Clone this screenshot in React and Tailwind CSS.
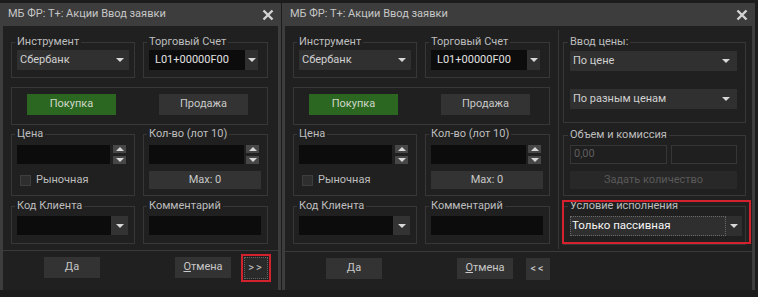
import React from "react";

const Arrow = ({ up = false, color = "#d8d8d8" }) => (
    <svg width="8" height="4" viewBox="0 0 8 4">
        <path d={up ? "M0 4h8L4 0z" : "M0 0h8L4 4z"} fill={color} />
    </svg>
);

const Group = ({ legend, className = "", children }) => (
    <fieldset className={`border border-[#373737] ${className}`}>
        {legend && <legend className="-ml-[2px] px-[2px] leading-4 text-[#bdbdbd]">{legend}</legend>}
        {children}
    </fieldset>
);

const Btn = ({ className = "", children }) => (
    <div className={`flex items-center justify-center bg-[#333333] text-[#c8c8c8] ${className}`}>{children}</div>
);

const Spin = () => (
    <div className="flex h-[19px] w-[13px] flex-col justify-between">
        <div className="flex h-[8px] items-center justify-center bg-[#474747]"><Arrow up /></div>
        <div className="flex h-[8px] items-center justify-center bg-[#474747]"><Arrow /></div>
    </div>
);

function MainPanel() {
    return (
        <div className="w-[273px] shrink-0 pl-[8px] pt-[4px] pb-[4px]">
            {/* instrument / account */}
            <div className="grid grid-cols-[124px_125px] gap-x-[8px]">
                <Group legend="Инструмент" className="px-[5px] pb-[7px]">
                    <div className="flex h-[20px] w-[112px] items-center justify-between bg-[#303030] pl-[3px] pr-[5px] text-[#d0d0d0]">
                        <span>Сбербанк</span>
                        <Arrow />
                    </div>
                </Group>
                <Group legend="Торговый Счет" className="px-[5px] pb-[7px]">
                    <div className="flex h-[20px] w-[109px]">
                        <div className="flex flex-1 items-center bg-[#0c0c0c] pl-[6px] text-[#e2e2e2]">L01+00000F00</div>
                        <div className="flex w-[13px] items-center justify-center bg-[#303030]"><Arrow /></div>
                    </div>
                </Group>
            </div>

            {/* buy / sell */}
            <fieldset className="mt-[9px] flex h-[38px] w-[257px] items-start border border-[#373737] pl-[15px] pt-[6px]">
                <div className="flex h-[21px] w-[89px] items-center justify-center bg-[#2c6722] text-[#cfd8c8]">Покупка</div>
                <Btn className="ml-[43px] h-[21px] w-[89px]">Продажа</Btn>
            </fieldset>

            {/* price / qty */}
            <div className="mt-[1px] grid grid-cols-[124px_125px] gap-x-[8px]">
                <Group legend="Цена" className="px-[5px] pt-[3px] pb-[6px]">
                    <div className="flex gap-[3px]">
                        <div className="h-[19px] w-[93px] bg-[#0c0c0c]" />
                        <Spin />
                    </div>
                    <div className="mt-[7px] flex h-[18px] items-center pl-[3px]">
                        <div className="h-[11px] w-[11px] border border-[#3e3e3e] bg-[#2e2e2e]" />
                        <span className="ml-[5px] text-[#bdbdbd]">Рыночная</span>
                    </div>
                </Group>
                <Group legend="Кол-во (лот 10)" className="px-[5px] pt-[3px] pb-[6px]">
                    <div className="flex gap-[2px]">
                        <div className="h-[19px] w-[95px] bg-[#0c0c0c]" />
                        <Spin />
                    </div>
                    <Btn className="mt-[7px] h-[18px] w-[112px]">Max: 0</Btn>
                </Group>
            </div>

            {/* client / comment */}
            <div className="mt-[2px] grid grid-cols-[124px_125px] gap-x-[8px]">
                <Group legend="Код Клиента" className="px-[5px] pt-[2px] pb-[8px]">
                    <div className="flex h-[19px] w-[111px]">
                        <div className="flex-1 bg-[#0c0c0c]" />
                        <div className="flex w-[17px] items-center justify-center bg-[#333333]"><Arrow /></div>
                    </div>
                </Group>
                <Group legend="Комментарий" className="px-[5px] pt-[2px] pb-[8px]">
                    <div className="h-[19px] w-[112px] bg-[#0c0c0c]" />
                </Group>
            </div>
        </div>
    );
}

function ExtraPanel() {
    return (
        <div className="w-[194px] shrink-0 border-l border-[#363636] pl-[4px] pr-[6px] pt-[4px] pb-[4px]">
            <Group legend="Ввод цены:" className="w-[183px] pl-[6px] pt-[1px] pb-[13px]">
                <div className="flex h-[20px] w-[167px] items-center justify-between bg-[#303030] pl-[3px] pr-[7px] text-[#d0d0d0]">
                    <span>По цене</span>
                    <Arrow />
                </div>
                <div className="mt-[18px] flex h-[20px] w-[167px] items-center justify-between bg-[#303030] pl-[3px] pr-[7px] text-[#d0d0d0]">
                    <span>По разным ценам</span>
                    <Arrow />
                </div>
            </Group>

            <Group legend="Объем  и комиссия" className="mt-[4px] w-[183px] pl-[6px] pt-[2px] pb-[6px]">
                <div className="flex gap-[4px]">
                    <div className="flex h-[19px] w-[97px] items-center border border-[#363636] bg-[#1f1f1f] pl-[3px] text-[#5e5e5e]">0,00</div>
                    <div className="h-[19px] w-[66px] border border-[#363636] bg-[#1f1f1f]" />
                </div>
                <div className="mt-[7px] flex h-[18px] w-[167px] items-center justify-center bg-[#282828] text-[#5a5a5a]">Задать количество</div>
            </Group>

            <div className="relative mt-[2px]">
                <Group legend="Условие исполнения" className="w-[183px] pl-[6px] pt-[2px] pb-[8px]">
                    <div className="flex h-[20px] w-[172px] bg-[#2f2f2f]">
                        <div className="flex flex-1 items-center border border-dotted border-[#6a6a6a] pl-[1px] text-[11.5px] text-[#f6f6f6]">Только пассивная</div>
                        <div className="flex w-[16px] items-center justify-center"><Arrow /></div>
                    </div>
                </Group>
                <div className="absolute -left-[1px] -right-[5px] top-[2px] bottom-[1px] border-2 border-[#d3222e]" />
            </div>
        </div>
    );
}

function Window({ expanded }) {
    return (
        <div className={`flex h-[287px] flex-col border-x-[3px] border-[#3d3d3d] bg-[#202020] ${expanded ? "w-[473px]" : "w-[281px]"}`}>
            <div className="flex h-[23px] shrink-0 items-center justify-between bg-[#3d3d3d] pl-[5px] pr-[4px]">
                <span className="text-[11px] text-[#c6c6c6]">МБ ФР: Т+: Акции Ввод заявки</span>
                <svg width="12" height="12" viewBox="0 0 12 12">
                    <path d="M1.5 1.5l9 9M10.5 1.5l-9 9" stroke="#d4d4d4" strokeWidth="2.4" />
                </svg>
            </div>
            <div className="flex pt-[4px]">
                <MainPanel />
                {expanded && <ExtraPanel />}
            </div>
            <div className="mt-[2px] h-px bg-[#3a3a3a]" />
            <div className="mt-[6px] flex items-start pl-[41px]">
                <Btn className="h-[21px] w-[56px]"><span className="underline">Д</span>а</Btn>
                <Btn className="ml-[75px] h-[21px] w-[56px]"><span className="underline">О</span>тмена</Btn>
                {expanded ? (
                    <Btn className="ml-[13px] h-[22px] w-[24px] text-[11px] tracking-[2px]">&lt;&lt;</Btn>
                ) : (
                    <div className="ml-[13px] flex h-[22px] w-[24px] items-center justify-center border border-dotted border-[#666] bg-[#2a2a2a] text-[11px] tracking-[2px] text-[#c8c8c8] outline-2 outline-offset-[1px] outline-[#d3222e]">&gt;&gt;</div>
                )}
            </div>
        </div>
    );
}

export default function App() {
    return (
        <div className="h-[297px] w-[758px] overflow-hidden bg-[#1c1c1c] pt-[3px] font-['Roboto',sans-serif] text-[11px]">
            <div className="flex gap-[1px]">
                <Window />
                <Window expanded />
            </div>
        </div>
    );
}
